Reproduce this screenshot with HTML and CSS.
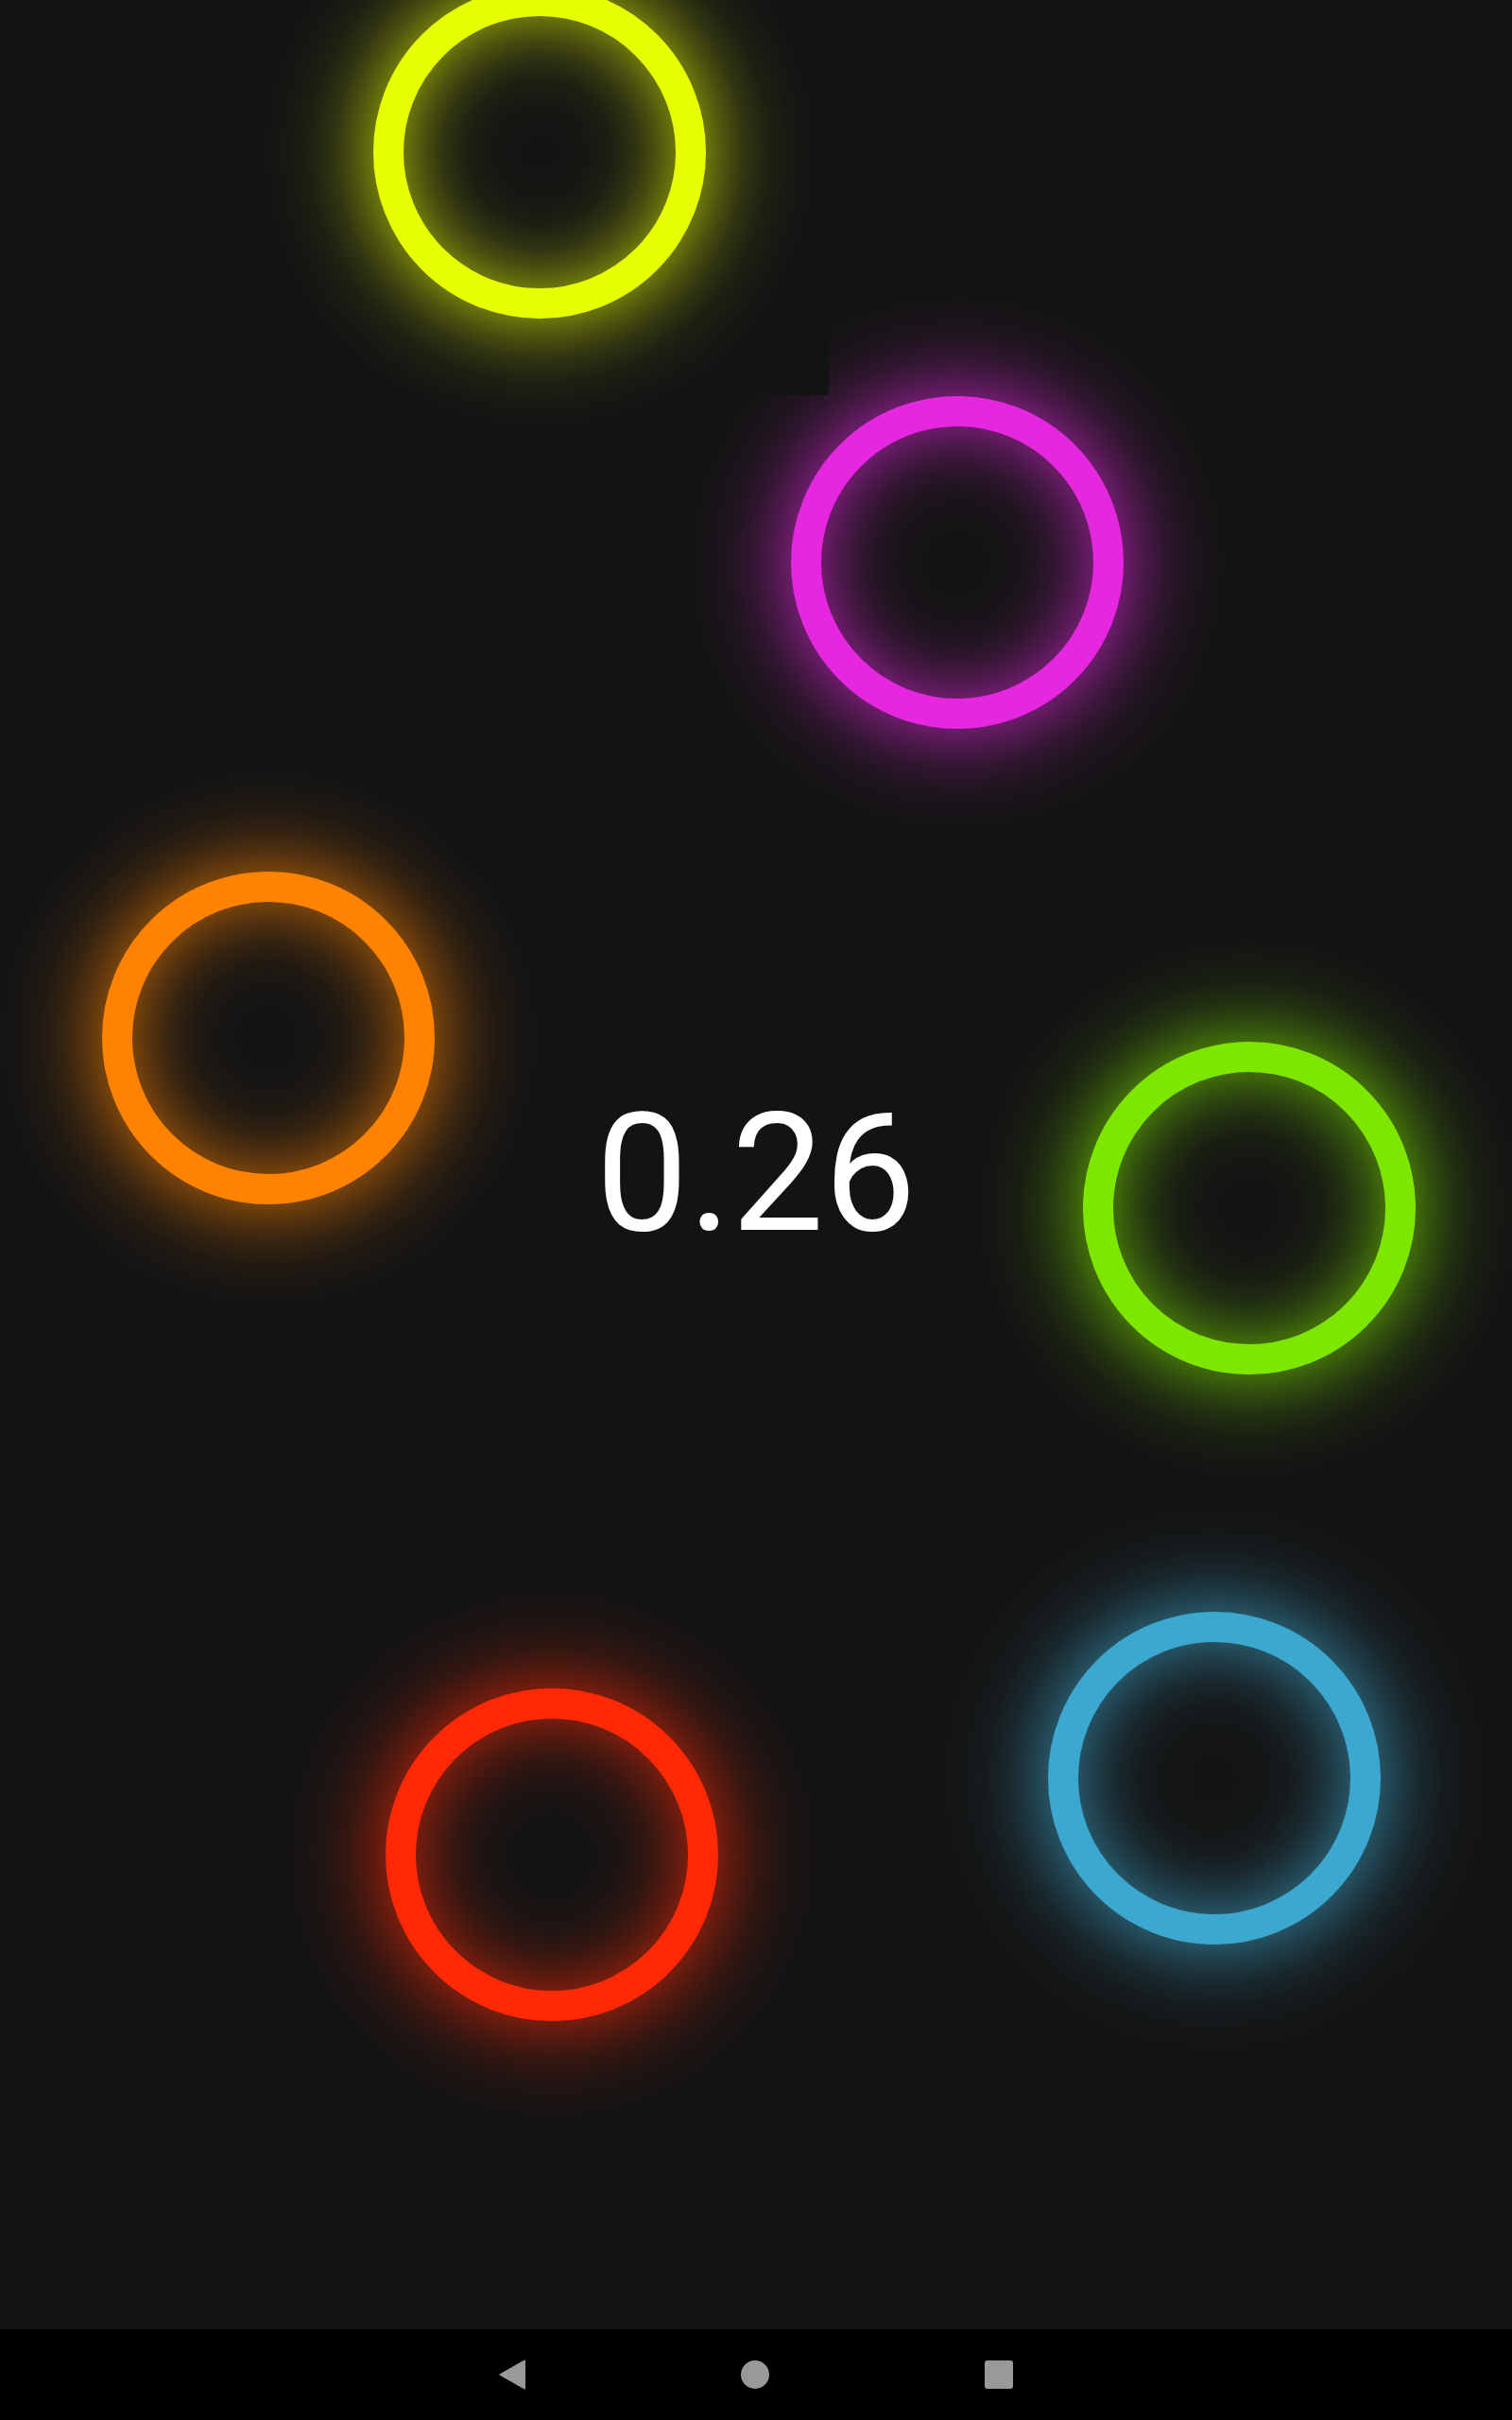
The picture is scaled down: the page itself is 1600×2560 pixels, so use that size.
FILE: index.html
```html
<!DOCTYPE html>
<html lang="en">
<head>
<meta charset="utf-8">
<title>Neon rings</title>
<link rel="stylesheet" href="styles.css">
</head>
<body>
<div class="screen">
  <main class="stage">
    <div class="ring ring-magenta"></div>
    <div class="view-mask"></div>
    <div class="ring ring-yellow"></div>
    <div class="ring ring-orange"></div>
    <div class="ring ring-green"></div>
    <div class="ring ring-blue"></div>
    <div class="ring ring-red"></div>
    <div class="score">0.26</div>
  </main>
  <nav class="navbar">
    <svg class="nav-back" width="28" height="32" viewBox="0 0 28 32" aria-label="Back">
      <polygon points="27,1.5 27,30.5 1.5,16" fill="#999999" stroke="#999999" stroke-width="2" stroke-linejoin="round"/>
    </svg>
    <span class="nav-home" aria-label="Home"></span>
    <span class="nav-recent" aria-label="Recent apps"></span>
  </nav>
</div>
</body>
</html>
```

FILE: styles.css
```css
html, body {
  margin: 0;
  padding: 0;
  background: #131313;
}

.screen {
  width: 1600px;
  height: 2560px;
  display: flex;
  flex-direction: column;
  overflow: hidden;
  font-family: Roboto, "Noto Sans", "Liberation Sans", sans-serif;
}

.stage {
  position: relative;
  flex: 0 0 2464px;
  height: 2464px;
  background: #131313;
  display: flex;
  align-items: center;
  justify-content: center;
  overflow: hidden;
}

.score {
  position: relative;
  z-index: 2;
  color: #ffffff;
  font-size: 174px;
  font-weight: 400;
  margin-top: 18px;
  letter-spacing: 0;
}

/* glow container: 612px square centred on the ring */
.ring {
  position: absolute;
  width: 612px;
  height: 612px;
  border-radius: 50%;
  background: radial-gradient(circle 306px at center,
    rgba(var(--rgb), 0) 0px,
    rgba(var(--rgb), 0.015) 50px,
    rgba(var(--rgb), 0.055) 78px,
    rgba(var(--rgb), 0.14) 102px,
    rgba(var(--rgb), 0.27) 124px,
    rgba(var(--rgb), 0.42) 144px,
    rgba(var(--rgb), 0.42) 176px,
    rgba(var(--rgb), 0.27) 196px,
    rgba(var(--rgb), 0.14) 218px,
    rgba(var(--rgb), 0.06) 242px,
    rgba(var(--rgb), 0.02) 268px,
    rgba(var(--rgb), 0.005) 290px,
    rgba(var(--rgb), 0) 306px);
}

.ring::after {
  content: "";
  position: absolute;
  left: 130px;
  top: 130px;
  width: 352px;
  height: 352px;
  box-sizing: border-box;
  border-radius: 50%;
  border: 32px solid rgb(var(--rgb));
}

/* the yellow ring's view bounds hide the magenta glow beneath it */
.view-mask {
  position: absolute;
  left: 700px;
  top: 280px;
  width: 177px;
  height: 138px;
  background: #131313;
}

/* centre (571,161) */
.ring-yellow {
  --rgb: 230, 255, 2;
  left: 265px;
  top: -145px;
}

/* centre (1013,595) */
.ring-magenta {
  --rgb: 229, 40, 224;
  left: 707px;
  top: 289px;
}

/* centre (284,1098) */
.ring-orange {
  --rgb: 255, 131, 0;
  left: -22px;
  top: 792px;
}

/* centre (1322,1278) */
.ring-green {
  --rgb: 126, 231, 0;
  left: 1016px;
  top: 972px;
}

/* centre (1285,1881) */
.ring-blue {
  --rgb: 61, 168, 207;
  left: 979px;
  top: 1575px;
}

/* centre (584,1962) */
.ring-red {
  --rgb: 255, 42, 5;
  left: 278px;
  top: 1656px;
}

.navbar {
  flex: 0 0 96px;
  height: 96px;
  background: #000000;
  display: flex;
  align-items: center;
  justify-content: center;
  gap: 228px;
}

.nav-back {
  display: block;
  width: 28px;
  height: 32px;
}

.nav-home {
  display: block;
  width: 30px;
  height: 30px;
  border-radius: 50%;
  background: #999999;
}

.nav-recent {
  display: block;
  width: 30px;
  height: 30px;
  border-radius: 3px;
  background: #999999;
}
```
